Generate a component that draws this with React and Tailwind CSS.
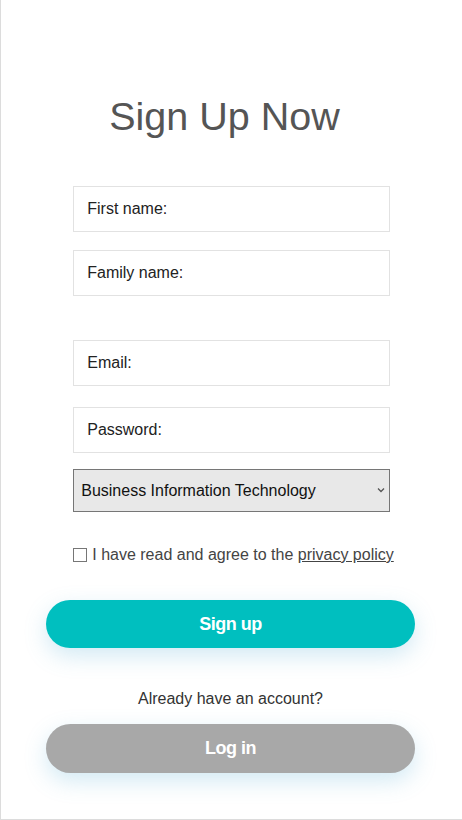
import { useState } from "react";

const Field = ({ label, type = "text", className = "" }) => (
  <input
    type={type}
    placeholder={label}
    className={`block w-[317px] h-[46px] border border-[#e2e2e2] bg-white px-[13px] text-[16px] text-[#222] placeholder:text-[#222] outline-none ${className}`}
  />
);

export default function App() {
  const [agree, setAgree] = useState(false);

  return (
    <div
      className="h-[820px] w-full border-l border-b border-[#dcdcdc] bg-white overflow-hidden"
      style={{ fontFamily: '"Liberation Sans", Arial, sans-serif' }}
    >
      <div className="flex flex-col items-center pt-[93px]">
        <h1 className="text-[39.5px] leading-[46px] text-[#555] pr-[14px]">Sign Up Now</h1>

        <form className="mt-[47px] flex flex-col items-center" onSubmit={(e) => e.preventDefault()}>
          <div className="pl-[4px]">
            <Field label="First name:" />
            <Field label="Family name:" className="mt-[18px]" />
            <Field label="Email:" type="email" className="mt-[44px]" />
            <Field label="Password:" type="password" className="mt-[21px]" />
            <div className="relative mt-[16px] w-[317px]">
              <select className="block w-full h-[43px] appearance-none border border-[#767676] bg-[#e8e8e8] pl-[7px] text-[16px] text-[#111] outline-none">
                <option>Business Information Technology</option>
                <option>Computer Science</option>
                <option>Software Engineering</option>
              </select>
              <svg
                className="pointer-events-none absolute right-[5px] top-[18px]"
                width="8"
                height="6"
                viewBox="0 0 8 6"
                fill="none"
                stroke="#555"
                strokeWidth="1.3"
              >
                <path d="M1 1.5 L4 4.5 L7 1.5" />
              </svg>
            </div>

            <label className="mt-[31px] flex items-center gap-[5px] text-[16px] text-[#444]">
              <input
                type="checkbox"
                checked={agree}
                onChange={(e) => setAgree(e.target.checked)}
                className="h-[14px] w-[14px] appearance-none border border-[#767676] bg-white checked:bg-[#00bfbf]"
              />
              <span>
                I have read and agree to the{" "}
                <a href="#" className="underline text-[#444]">privacy policy</a>
              </span>
            </label>
          </div>

          <button
            type="submit"
            className="mt-[33px] mr-[2px] h-[48px] w-[369px] rounded-full bg-[#00bfbf] text-[18px] font-bold text-white tracking-[-0.5px] shadow-[0_8px_22px_rgba(80,170,210,0.25)]"
          >
            Sign up
          </button>

          <p className="mt-[39px] mr-[2px] text-[16px] text-[#333]">Already have an account?</p>

          <button
            type="button"
            className="mt-[13px] mr-[2px] h-[49px] w-[369px] rounded-full bg-[#a8a8a8] text-[18px] font-bold text-white tracking-[-0.5px] shadow-[0_8px_22px_rgba(80,170,210,0.25)]"
          >
            Log in
          </button>
        </form>
      </div>
    </div>
  );
}
